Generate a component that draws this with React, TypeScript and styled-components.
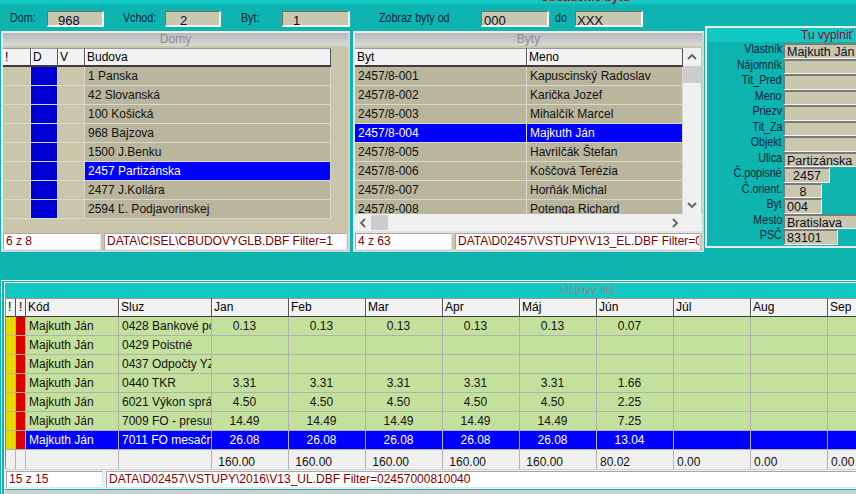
import React from "react";
import styled, { createGlobalStyle } from "styled-components";

const TEAL = "#0db4b0";
const TEAL_LIGHT = "#12c8c3";
const KHAKI = "#b9b69d";
const BEIGE = "#c9c6ab";
const FIELD = "#c9c7ad";
const BLUE = "#0000ff";
const DEEP_BLUE = "#0000d6";
const MAROON = "#800000";
const GREEN = "#c3e19c";

const GlobalStyle = createGlobalStyle`
  html, body {
    margin: 0;
    padding: 0;
    overflow: hidden;
    background: ${TEAL};
  }
  body {
    font-family: "Liberation Sans", Arial, sans-serif;
    font-size: 12px;
  }
`;

const Screen = styled.div`
  width: 856px;
  height: 494px;
  overflow: hidden;
  background: ${TEAL};
`;

const TopStrip = styled.div`
  width: 1170px;
  height: 4px;
  background: ${TEAL_LIGHT};
  overflow: hidden;
  display: flex;
  justify-content: center;
  align-items: flex-start;
`;

const WindowTitle = styled.div`
  flex: none;
  color: #d00000;
  font-weight: bold;
  line-height: 12px;
  margin-top: -9px;
`;

const Upper = styled.div`
  display: flex;
  align-items: flex-start;
`;

const LeftCol = styled.div`
  width: 704px;
  flex: none;
  display: flex;
  flex-direction: column;
`;

/* narrow caption text, like the old dialog font */
const Narrow = styled.span<{ $origin: "left" | "right" }>`
  display: inline-block;
  font-size: 13px;
  transform: scaleX(0.82);
  transform-origin: ${(p) => p.$origin} center;
  white-space: nowrap;
`;

/* ---------- filter bar ---------- */

const FilterBar = styled.div`
  height: 27px;
  box-sizing: border-box;
  padding-top: 7px;
  display: flex;
  align-items: flex-start;
`;

const FilterLabel = styled.span<{ $ml: number; $w: number }>`
  margin-left: ${(p) => p.$ml}px;
  width: ${(p) => p.$w}px;
  flex: none;
  line-height: 14px;
  margin-top: 0px;
  color: #08263a;
`;

const FilterInput = styled.div<{ $w: number; $pad: number }>`
  width: ${(p) => p.$w}px;
  height: 16px;
  flex: none;
  box-sizing: border-box;
  background: ${FIELD};
  border-style: solid;
  border-width: 1px 2px 2px 1px;
  border-color: #707070 #f6f6f6 #f6f6f6 #707070;
  padding-left: ${(p) => p.$pad}px;
  padding-top: 2px;
  font-size: 13px;
  line-height: 13px;
  color: #0c0c30;
`;

/* ---------- list panels ---------- */

const PanelsRow = styled.div`
  display: flex;
  gap: 3px;
  padding-left: 1px;
`;

const Panel = styled.section<{ $w: number }>`
  width: ${(p) => p.$w}px;
  height: 221px;
  box-sizing: border-box;
  background: ${BEIGE};
  border: 2px solid #ececec;
  border-right-color: #d4d4d4;
  border-bottom-color: #d4d4d4;
  display: flex;
  flex-direction: column;
  overflow: hidden;
`;

const PanelTitle = styled.div`
  height: 13px;
  flex: none;
  line-height: 13px;
  text-align: center;
  color: #8e8e8e;
  background: linear-gradient(#b8b8b8, #dadada);
  margin-bottom: 2px;
`;

const PanelBody = styled.div<{ $h: number }>`
  height: ${(p) => p.$h}px;
  flex: none;
  display: flex;
  overflow: hidden;
`;

const Table = styled.div<{ $cols: string }>`
  display: grid;
  grid-template-columns: ${(p) => p.$cols};
  grid-auto-rows: 19px;
  align-content: start;
  flex: none;
`;

const HeadCell = styled.div<{ $pad?: number; $h?: number }>`
  box-sizing: border-box;
  height: ${(p) => p.$h ?? 19}px;
  background: #f2f2f2;
  color: #000;
  padding-left: ${(p) => p.$pad ?? 2}px;
  line-height: 16px;
  border-top: 1px solid #9a9a9a;
  border-right: 1px solid #555;
  border-bottom: 2px solid #3c3c3c;
  box-shadow: inset 1px 0 #ffffff;
  white-space: nowrap;
  overflow: hidden;
`;

const Cell = styled.div<{ $bg: string; $fg?: string; $line?: string; $align?: string; $padR?: number }>`
  box-sizing: border-box;
  background: ${(p) => p.$bg};
  color: ${(p) => p.$fg ?? "#111"};
  border-right: 1px solid ${(p) => p.$line ?? "#d8d8d0"};
  border-bottom: 1px solid ${(p) => p.$line ?? "#d8d8d0"};
  padding: 0 ${(p) => p.$padR ?? 3}px 0 3px;
  line-height: 18px;
  text-align: ${(p) => p.$align ?? "left"};
  white-space: nowrap;
  overflow: hidden;
  text-overflow: clip;
`;

const ListArea = styled.div`
  width: 328px;
  height: 166px;
  flex: none;
  overflow: hidden;
`;

const VScroll = styled.div`
  width: 18px;
  height: 166px;
  flex: none;
  background: #f0f0f0;
  display: flex;
  flex-direction: column;
  align-items: center;
`;

const ArrowBox = styled.div<{ $h: number }>`
  height: ${(p) => p.$h}px;
  flex: none;
  display: flex;
  align-items: center;
  justify-content: center;
  width: 100%;
`;

const Thumb = styled.div<{ $w?: number; $h?: number }>`
  width: ${(p) => (p.$w ? `${p.$w}px` : "100%")};
  height: ${(p) => (p.$h ? `${p.$h}px` : "100%")};
  background: #cdcdcd;
  flex: none;
`;

const Spacer = styled.div`
  flex: 1;
`;

const HScroll = styled.div`
  height: 17px;
  flex: none;
  display: flex;
  background: #f0f0f0;
  border-bottom: 2px solid #e2e2e2;
`;

const HTrack = styled.div`
  width: 328px;
  display: flex;
  align-items: stretch;
  padding: 1px 0;
  box-sizing: border-box;
`;

const HArrow = styled.div`
  width: 16px;
  display: flex;
  align-items: center;
  justify-content: center;
  flex: none;
`;

const StatusBar = styled.div`
  height: 17px;
  flex: none;
  display: flex;
  gap: 3px;
`;

const StatusBox = styled.div<{ $w: number }>`
  width: ${(p) => p.$w}px;
  flex: none;
  box-sizing: border-box;
  background: #fff;
  border-style: solid;
  border-width: 1px;
  border-color: #a6a6a6 #e4e4e4 #e4e4e4 #a6a6a6;
  color: ${MAROON};
  padding-left: 2px;
  line-height: 15px;
  white-space: nowrap;
  overflow: hidden;
`;

/* ---------- form panel ---------- */

const FormPanel = styled.section`
  margin-top: 22px;
  margin-left: 1px;
  width: 200px;
  height: 222px;
  flex: none;
  box-sizing: border-box;
  border: 2px solid #eaeaea;
  border-right: none;
  background: ${TEAL};
`;

const FormTitle = styled.div`
  height: 14px;
  line-height: 14px;
  background: ${TEAL_LIGHT};
  color: #9a0030;
  padding-left: 94px;
  white-space: nowrap;
  margin-bottom: 1px;
`;

const FormGrid = styled.div`
  display: grid;
  grid-template-columns: 76px 1fr;
  grid-auto-rows: 15.5px;
`;

const FormLabel = styled.div`
  text-align: right;
  padding-right: 1px;
  line-height: 12px;
  color: #06263a;
  white-space: nowrap;
`;

const FormField = styled.div<{ $w: number; $align?: string }>`
  width: ${(p) => p.$w}px;
  box-sizing: border-box;
  background: ${FIELD};
  border-style: solid;
  border-width: 2px 1px 1px 2px;
  border-color: #7a7a7a #f4f4f4 #f4f4f4 #7a7a7a;
  padding: 1px 2px 0;
  text-align: ${(p) => p.$align ?? "left"};
  font-size: 12.5px;
  line-height: 13px;
  color: #0c0c24;
  white-space: nowrap;
  overflow: hidden;
`;

/* ---------- ledger ---------- */

const Ledger = styled.section`
  margin-top: 28px;
  margin-left: 1px;
  width: 1166px;
  border-left: 1px solid #fff;
  border-top: 1px solid #fff;
  padding: 1px 0 0 2px;
`;

const LedgerInner = styled.div`
  border-left: 1px solid #fff;
  border-top: 1px solid #fff;
`;

const LedgerTitle = styled.div`
  height: 15px;
  line-height: 14px;
  background: ${TEAL_LIGHT};
  color: #8a8a8a;
  text-align: center;
`;

const LedgerTable = styled(Table)`
  border-left: 1px solid #8c8c8c;
  background: #f0f0f0;
`;

const TotalCell = styled.div`
  box-sizing: border-box;
  background: #f0f0f0;
  border-right: 1px solid #b4b4b4;
  padding: 5px 0 0 3px;
  line-height: 14px;
  white-space: pre;
  overflow: hidden;
  color: #111;
`;

const LedgerStatus = styled.div`
  height: 20px;
  box-sizing: border-box;
  padding: 1px 0 1px 1px;
  display: flex;
  gap: 3px;
  background: #f0f0f0;
  border-top: 1px solid #d0d0d0;
`;

const BottomBar = styled.div`
  height: 6px;
  background: #cfcfcf;
  border-top: 1px solid ${TEAL};
`;

/* ---------- icons ---------- */

const Chevron = ({ dir }: { dir: "up" | "down" | "left" | "right" }) => {
  const pts = {
    up: "1,6 5,2 9,6",
    down: "1,2 5,6 9,2",
    left: "6,1 2,5 6,9",
    right: "2,1 6,5 2,9",
  }[dir];
  const vertical = dir === "up" || dir === "down";
  return (
    <svg width={vertical ? 10 : 8} height={vertical ? 8 : 10} viewBox={vertical ? "0 0 10 8" : "0 0 8 10"}>
      <polyline points={pts} fill="none" stroke="#606060" strokeWidth="1.8" />
    </svg>
  );
};

/* ---------- data ---------- */

const buildings = [
  "1 Panska",
  "42 Slovanská",
  "100 Košická",
  "968 Bajzova",
  "1500 J.Benku",
  "2457 Partizánska",
  "2477 J.Kollára",
  "2594 Ľ. Podjavorinskej",
];

const flats = [
  ["2457/8-001", "Kapuscinský Radoslav"],
  ["2457/8-002", "Karička Jozef"],
  ["2457/8-003", "Mihalčík Marcel"],
  ["2457/8-004", "Majkuth Ján"],
  ["2457/8-005", "Havrilčák Štefan"],
  ["2457/8-006", "Koščová Terézia"],
  ["2457/8-007", "Horňák Michal"],
  ["2457/8-008", "Potenga Richard"],
];

const formFields: { label: string; value: string; w: number; align?: string }[] = [
  { label: "Vlastník", value: "Majkuth Ján", w: 100 },
  { label: "Nájomník", value: "", w: 100 },
  { label: "Tit_Pred", value: "", w: 100 },
  { label: "Meno", value: "", w: 100 },
  { label: "Priezv", value: "", w: 100 },
  { label: "Tit_Za", value: "", w: 100 },
  { label: "Objekt", value: "", w: 100 },
  { label: "Ulica", value: "Partizánska", w: 100 },
  { label: "Č.popisné", value: "2457", w: 47, align: "center" },
  { label: "Č.orient.", value: "8", w: 39, align: "center" },
  { label: "Byt", value: "004", w: 39 },
  { label: "Mesto", value: "Bratislava", w: 100 },
  { label: "PSČ", value: "83101", w: 55 },
];

const months = ["Jan", "Feb", "Mar", "Apr", "Máj", "Jún", "Júl", "Aug", "Sep", "Okt", "Nov", "Dec"];

const five = (v: string, last: string) => [v, v, v, v, v, last];

const ledgerRows = [
  { sluz: "0428 Bankové poplatky", vals: five("0.13", "0.07") },
  { sluz: "0429 Poistné", vals: [] as string[] },
  { sluz: "0437 Odpočty YZ", vals: [] as string[] },
  { sluz: "0440 TKR", vals: five("3.31", "1.66") },
  { sluz: "6021 Výkon správy", vals: five("4.50", "2.25") },
  { sluz: "7009 FO - presun", vals: five("14.49", "7.25") },
  { sluz: "7011 FO mesačne", vals: five("26.08", "13.04") },
];

const totals = [" 160.00", " 160.00", " 160.00", " 160.00", " 160.00", "80.02", "0.00", "0.00", "0.00", "0.00", "0.00", "0.00"];

const filters = [
  { label: "Dom:", ml: 10, lw: 37, value: "968", w: 57, pad: 10 },
  { label: "Vchod:", ml: 19, lw: 42, value: "2", w: 56, pad: 14 },
  { label: "Byt:", ml: 20, lw: 41, value: "1", w: 68, pad: 10 },
  { label: "Zobraz byty od", ml: 29, lw: 102, value: "000", w: 68, pad: 2 },
  { label: "do", ml: 6, lw: 20, value: "XXX", w: 68, pad: 1 },
];

const App = () => {
  const ledgerCols = `10px 10px 93px 93px repeat(12, 77px)`;
  return (
    <Screen>
      <GlobalStyle />
      <TopStrip>
        <WindowTitle>Obsadenie bytu</WindowTitle>
      </TopStrip>

      <Upper>
        <LeftCol>
          <FilterBar>
            {filters.map((f) => (
              <React.Fragment key={f.label}>
                <FilterLabel $ml={f.ml} $w={f.lw}>
                  <Narrow $origin="left">{f.label}</Narrow>
                </FilterLabel>
                <FilterInput $w={f.w} $pad={f.pad}>
                  {f.value}
                </FilterInput>
              </React.Fragment>
            ))}
          </FilterBar>

          <PanelsRow>
            <Panel $w={349}>
              <PanelTitle>Domy</PanelTitle>
              <PanelBody $h={185}>
                <Table $cols="28px 27px 27px 246px">
                  <HeadCell>!</HeadCell>
                  <HeadCell>D</HeadCell>
                  <HeadCell>V</HeadCell>
                  <HeadCell>Budova</HeadCell>
                  {buildings.map((b, i) => (
                    <React.Fragment key={b}>
                      <Cell $bg={BEIGE} />
                      <Cell $bg={DEEP_BLUE} />
                      <Cell $bg={BEIGE} />
                      <Cell $bg={i === 5 ? BLUE : KHAKI} $fg={i === 5 ? "#fff" : undefined}>
                        {b}
                      </Cell>
                    </React.Fragment>
                  ))}
                </Table>
              </PanelBody>
              <StatusBar>
                <StatusBox $w={98}>6 z 8</StatusBox>
                <StatusBox $w={243}>DATA\CISEL\CBUDOVYGLB.DBF Filter=1</StatusBox>
              </StatusBar>
            </Panel>

            <Panel $w={351}>
              <PanelTitle>Byty</PanelTitle>
              <PanelBody $h={166}>
                <ListArea>
                  <Table $cols="172px 156px">
                    <HeadCell>Byt</HeadCell>
                    <HeadCell>Meno</HeadCell>
                    {flats.map(([byt, meno], i) => {
                      const sel = i === 3;
                      return (
                        <React.Fragment key={byt}>
                          <Cell $bg={sel ? BLUE : KHAKI} $fg={sel ? "#fff" : undefined}>
                            {byt}
                          </Cell>
                          <Cell $bg={sel ? BLUE : KHAKI} $fg={sel ? "#fff" : undefined}>
                            {meno}
                          </Cell>
                        </React.Fragment>
                      );
                    })}
                  </Table>
                </ListArea>
                <VScroll>
                  <ArrowBox $h={18}>
                    <Chevron dir="up" />
                  </ArrowBox>
                  <Thumb $h={17} />
                  <Spacer />
                  <ArrowBox $h={18}>
                    <Chevron dir="down" />
                  </ArrowBox>
                </VScroll>
              </PanelBody>
              <HScroll>
                <HTrack>
                  <HArrow>
                    <Chevron dir="left" />
                  </HArrow>
                  <Thumb $w={17} />
                  <Spacer />
                  <HArrow>
                    <Chevron dir="right" />
                  </HArrow>
                </HTrack>
              </HScroll>
              <StatusBar>
                <StatusBox $w={97}>4 z 63</StatusBox>
                <StatusBox $w={245}>DATA\D02457\VSTUPY\V13_EL.DBF Filter=0</StatusBox>
              </StatusBar>
            </Panel>
          </PanelsRow>
        </LeftCol>

        <FormPanel>
          <FormTitle>Tu vyplniť</FormTitle>
          <FormGrid>
            {formFields.map((f) => (
              <React.Fragment key={f.label}>
                <FormLabel>
                  <Narrow $origin="right">{f.label}</Narrow>
                </FormLabel>
                <FormField $w={f.w} $align={f.align}>
                  {f.value}
                </FormField>
              </React.Fragment>
            ))}
          </FormGrid>
        </FormPanel>
      </Upper>

      <Ledger>
        <LedgerInner>
          <LedgerTitle>Účtový list</LedgerTitle>
          <LedgerTable $cols={ledgerCols}>
            <HeadCell $h={20} $pad={2}>!</HeadCell>
            <HeadCell $h={20} $pad={3}>!</HeadCell>
            <HeadCell $h={20}>Kód</HeadCell>
            <HeadCell $h={20}>Sluz</HeadCell>
            {months.map((m) => (
              <HeadCell $h={20} key={m}>
                {m}
              </HeadCell>
            ))}
            {ledgerRows.map((r, i) => {
              const sel = i === ledgerRows.length - 1;
              const bg = sel ? BLUE : GREEN;
              const fg = sel ? "#fff" : undefined;
              return (
                <React.Fragment key={r.sluz}>
                  <Cell $bg="#e0dc00" $line="#b0b0b0" />
                  <Cell $bg="#dc0000" $line="#b0b0b0" />
                  <Cell $bg={bg} $fg={fg} $line="#b0b0b0">
                    Majkuth Ján
                  </Cell>
                  <Cell $bg={bg} $fg={fg} $line="#b0b0b0">
                    {r.sluz}
                  </Cell>
                  {months.map((m, k) => (
                    <Cell key={m} $bg={bg} $fg={fg} $line="#b0b0b0" $align="center" $padR={14}>
                      {r.vals[k] ?? ""}
                    </Cell>
                  ))}
                </React.Fragment>
              );
            })}
            <TotalCell />
            <TotalCell />
            <TotalCell />
            <TotalCell />
            {totals.map((t, k) => (
              <TotalCell key={k}>{t}</TotalCell>
            ))}
          </LedgerTable>
          <LedgerStatus>
            <StatusBox $w={97}>15 z 15</StatusBox>
            <StatusBox $w={1000}>DATA\D02457\VSTUPY\2016\V13_UL.DBF Filter=02457000810040</StatusBox>
          </LedgerStatus>
          <BottomBar />
        </LedgerInner>
      </Ledger>
    </Screen>
  );
};

export default App;
